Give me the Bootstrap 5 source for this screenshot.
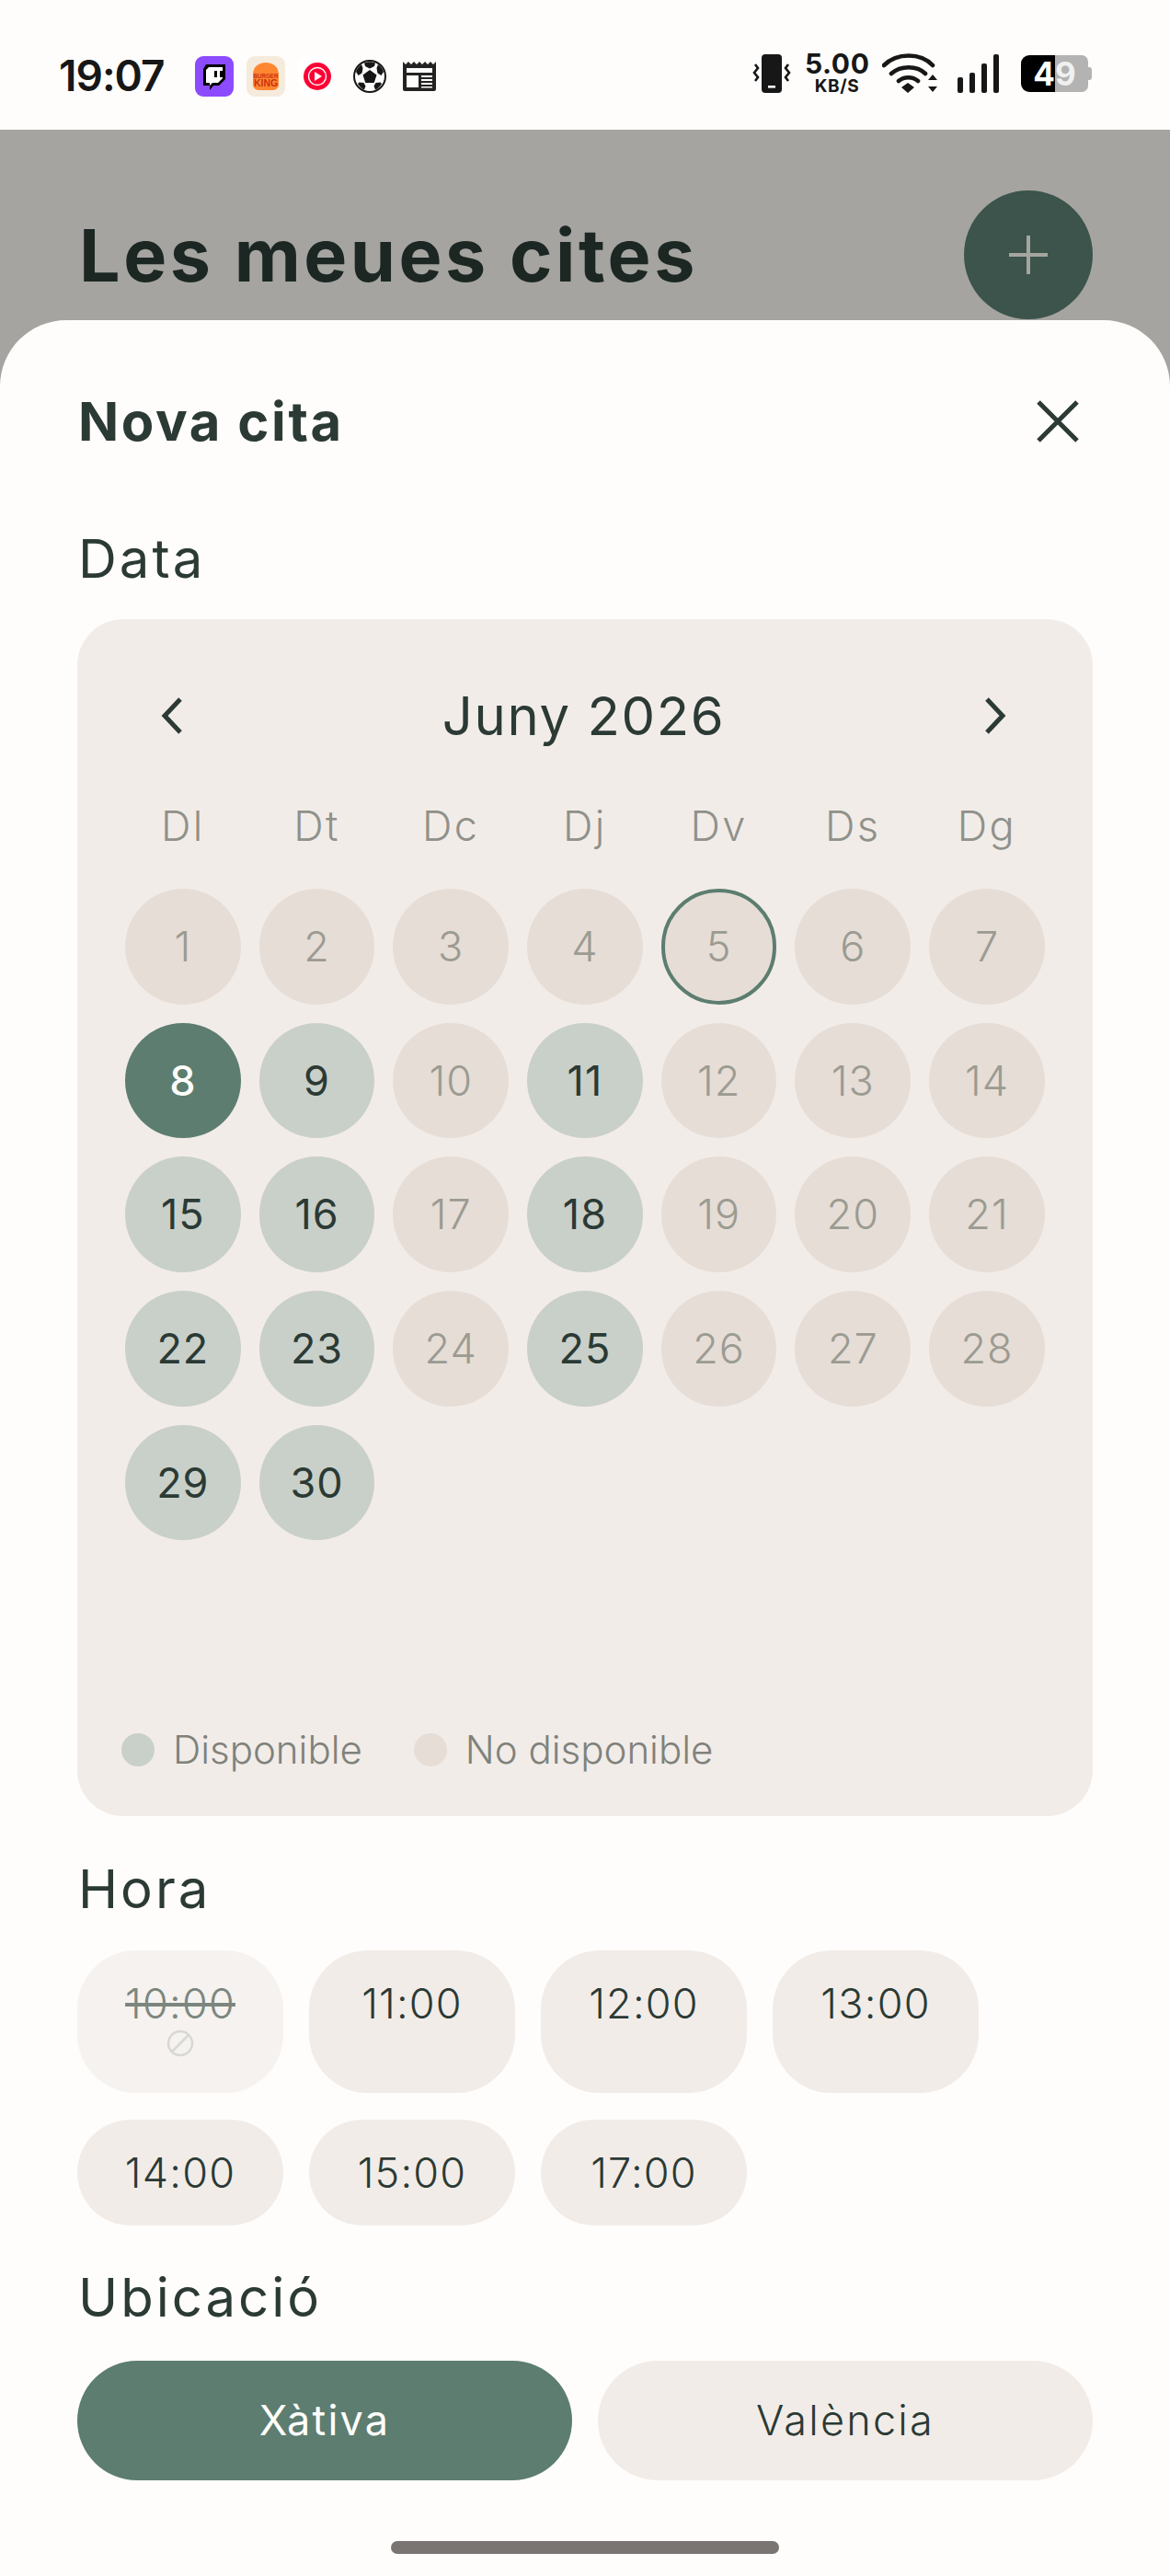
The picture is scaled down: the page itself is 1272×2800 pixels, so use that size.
<!DOCTYPE html>
<html lang="ca">
<head>
    <meta charset="UTF-8">
    <meta name="viewport" content="width=device-width, initial-scale=1.0">
    <title>Les meues cites</title>
    <link href="https://cdn.jsdelivr.net/npm/bootstrap@5.3.3/dist/css/bootstrap.min.css" rel="stylesheet">
    <style>
        html, body { margin: 0; background: #fffdfb; }
        body { width: 1272px; height: 2800px; overflow: hidden; font-family: "Inter", "Liberation Sans", sans-serif; color: #2b3a35; }
        .status-bar { height: 141px; padding: 0 84px 36px 64px; background: #fffdfb; color: #171717; }
        .clock { font-size: 46px; font-weight: 600; letter-spacing: -1px; width: 148px; line-height: 1; }
        .app-icon { display: block; width: 42px; height: 44px; }
        .speed { width: 70px; text-align: center; font-weight: 700; color: #171717; }
        .speed-num { font-size: 30px; letter-spacing: .6px; line-height: 28px; }
        .speed-unit { font-size: 19px; letter-spacing: .6px; line-height: 22px; }
        .battery { width: 78px; height: 40px; font-size: 35px; font-weight: 700; line-height: 40px; margin-left: 23px; }
        .batt-full { width: 37px; background: #000; color: #fff; border-radius: 9px 0 0 9px; text-align: right; }
        .batt-empty { width: 36px; background: #b3b3b3; color: #f0f0f0; border-radius: 0 7px 7px 0; }
        .batt-tip { width: 4px; height: 14px; background: #b3b3b3; border-radius: 0 3px 3px 0; }
        .backdrop { background: #a5a4a1; height: 2659px; }
        .page-head { height: 207px; padding: 66px 84px 1px 86px; }
        .page-title { font-size: 79px; font-weight: 700; color: #1c2723; margin: 0; line-height: 140px; letter-spacing: 3.5px; }
        .fab { width: 140px; height: 140px; border-radius: 50%; background: #3c544b; border: 0; padding: 0; }
        .sheet { background: #fffdfb; border-radius: 72px 72px 0 0; height: 2452px; padding: 74px 84px 0; }
        .sheet-title { font-size: 58px; font-weight: 700; line-height: 72px; margin: 0; padding-left: 1px; letter-spacing: 2.6px; }
        .close-x { background: none; border: 0; padding: 0; width: 50px; height: 50px; margin-right: 13px; }
        .field-label { font-size: 58px; font-weight: 400; line-height: 72px; margin: 0; padding-left: 1px; letter-spacing: 3px; }
        .cal-card { background: #f2ece8; border-radius: 50px; height: 1301px; margin-top: 30px; margin-bottom: 43px; padding: 60px 52px 50px; }
        .cal-head { height: 90px; padding: 0 32px 0 29px; }
        .cal-month { font-size: 58px; font-weight: 400; letter-spacing: 1.6px; line-height: 90px; }
        .arrow-btn { background: none; border: 0; padding: 0; width: 48px; height: 48px; }
        .week-row, .day-grid { display: grid; grid-template-columns: repeat(7, 125.7px); column-gap: 20px; }
        .week-row { margin-top: 50px; height: 50px; font-size: 45px; font-weight: 300; color: #8f918a; text-align: center; line-height: 50px; letter-spacing: 2.4px; }
        .day-grid { margin-top: 43px; row-gap: 20px; height: 854px; grid-auto-rows: 125.7px; }
        .day-cell { border-radius: 50%; font-size: 45px; display: flex; align-items: center; justify-content: center; letter-spacing: 1px; }
        .day-off { background: #e6ddd6; color: #9b9b92; font-weight: 300; }
        .day-today { background: #e6ddd6; color: #9b9b92; font-weight: 300; border: 4px solid #5c7d70; }
        .day-free { background: #c9d0c9; color: #2b3a35; font-weight: 400; }
        .day-selected { background: #5c7d70; color: #fffdfb; font-weight: 500; }
        .legend-row { margin-top: 62px; margin-left: -4px; height: 40px; font-size: 42px; font-weight: 300; color: #7f827b; line-height: 40px; }
        .legend-dot { width: 36px; height: 36px; border-radius: 50%; margin-right: 20px; }
        .dot-free { background: #c9d0c9; }
        .dot-off { background: #e6ddd6; }
        .hour-row { margin-top: 31px; gap: 28px; }
        .hour-chip { width: 224px; background: #f2ece8; font-size: 45px; font-weight: 300; color: #2b3a35; text-align: center; line-height: 54px; letter-spacing: 1.2px; }
        .hour-tall { height: 155px; border-radius: 64px; padding-top: 31px; }
        .hour-short { height: 115px; border-radius: 58px; padding-top: 31px; }
        .hour-off { background: #f5f2ef; color: #7c867f; }
        .hour-off svg { display: block; margin: 1px auto 0; }
        .place-row { margin-top: 33px; gap: 28px; }
        .place-btn { flex: 1 1 0; height: 130px; border: 0; border-radius: 65px; font-size: 45px; font-weight: 300; letter-spacing: 2.2px; background: #f2ece8; color: #2b3a35; }
        .place-active { background: #5c7d70; color: #fffdfb; font-weight: 400; }
        .home-bar { width: 422px; height: 14px; border-radius: 7px; background: #7a7572; margin: 66px auto 0; }
        .section-gap { margin-top: 42px; }
    </style>
</head>
<body>
    <div class="status-bar d-flex align-items-end">
        <div class="clock">19:07</div>
        <div class="d-flex align-items-center" style="gap:14px">
            <svg class="app-icon" viewBox="0 0 42 44"><rect width="42" height="44" rx="9" fill="#8c4bff"/><path d="M12 9h21v16l-7 7h-6l-4 5v-5h-7V14z" fill="#000"/><path d="M15 12h15v12l-5 5h-6l-3 3v-3h-4V15z" fill="#fff"/><path d="M21 16h3v7h-3zM27 16h3v7h-3z" fill="#000"/></svg>
            <svg class="app-icon" viewBox="0 0 42 44"><rect width="42" height="44" rx="9" fill="#f5ebdc"/><path d="M7 20c0-8 6-13 14-13s14 5 14 13v11c0 3-3 6-6 6H13c-3 0-6-3-6-6z" fill="#ff8732"/><text x="21" y="24" text-anchor="middle" font-size="8" font-weight="700" fill="#c9320f" font-family="Liberation Sans" textLength="27" lengthAdjust="spacingAndGlyphs">BURGER</text><text x="21" y="33" text-anchor="middle" font-size="10" font-weight="700" fill="#c9320f" font-family="Liberation Sans" textLength="26" lengthAdjust="spacingAndGlyphs">KING</text></svg>
            <svg class="app-icon" viewBox="0 0 42 44"><rect width="42" height="44" rx="9" fill="#fff"/><circle cx="21" cy="22" r="15" fill="#ff0033"/><circle cx="21" cy="22" r="9.5" fill="none" stroke="#fff" stroke-width="1.4"/><path d="M18 17l8 5-8 5z" fill="#fff"/></svg>
            <svg class="app-icon" style="width:38px;margin-left:3px" viewBox="0 0 38 44">
                <circle cx="19" cy="22" r="17" fill="#fffdfb" stroke="#171717" stroke-width="2"/>
                <path d="M19 15l7.500 5.500-2.800 8.500h-9.400l-2.800-8.500zM13 7.500c4-1.800 8-1.800 12 0l-1 3.500-5 2.500-5-2.500zM4 17c1-3 3-6 6-8l1.500 4-1 5.500-4 2.500zM34 17c-1-3-3-6-6-8l-1.500 4 1 5.500 4 2.500zM6 30c2 3 4 5.500 7 6.500l1.500-4-2-3.500-5-.5zM32 30c-2 3-4 5.500-7 6.500l-1.500-4 2-3.500 5-.5z" fill="#171717"/>
            </svg>
            <svg class="app-icon" style="width:36px;margin-left:3px" viewBox="0 0 36 44"><path d="M0 6l3 3 3-3 3 3 3-3 3 3 3-3 3 3 3-3 3 3 3-3 3 3 3-3v30a2 2 0 0 1-2 2H2a2 2 0 0 1-2-2z" fill="#232323"/><path d="M4 13h28v5H4zM4 21h13v13H4zM20 21h12v2H20zM20 25h12v2H20zM20 29h12v2H20zM20 33h12v1.500H20z" fill="#fffdfb"/></svg>
        </div>
        <div class="d-flex align-items-center ms-auto">
            <svg width="44" height="44" viewBox="0 0 44 44"><rect x="11" y="1" width="22" height="42" rx="4" fill="#171717"/><rect x="18" y="35" width="8" height="2.600" fill="#fff"/><path d="M4 12l3 4-4 5 4 5-3 4M40 12l-3 4 4 5-4 5 3 4" fill="none" stroke="#171717" stroke-width="2.600"/></svg>
            <div class="speed" style="margin-left:14px"><div class="speed-num">5.00</div><div class="speed-unit">KB/S</div></div>
            <svg width="62" height="44" viewBox="0 0 62 44" style="margin-left:14px"><path d="M2 13C16-1 42-1 55 13M10 22c10-9 28-9 37 0M18 30c6-5 15-5 21 0" fill="none" stroke="#171717" stroke-width="4.600" stroke-linecap="round"/><path d="M28 43l-7-6 7-5 7 5zM50 29l5-6 5 6zM50 36h10l-5 6z" fill="#171717"/></svg>
            <svg width="46" height="44" viewBox="0 0 46 44" style="margin-left:20px"><rect x="0" y="26" width="6" height="17" rx="2" fill="#171717"/><rect x="13" y="21" width="6" height="22" rx="2" fill="#171717"/><rect x="26" y="11" width="6" height="32" rx="2" fill="#171717"/><rect x="39" y="1" width="6" height="42" rx="2" fill="#171717"/></svg>
            <div class="battery d-flex align-items-center">
                <span class="batt-full">4</span><span class="batt-empty">9</span><span class="batt-tip"></span>
            </div>
        </div>
    </div>

    <div class="backdrop">
        <div class="page-head d-flex justify-content-between align-items-center">
            <h1 class="page-title">Les meues cites</h1>
            <button class="fab d-flex align-items-center justify-content-center" type="button" aria-label="Afegir">
                <svg width="46" height="46" viewBox="0 0 46 46"><path d="M23 2v42M2 23h42" stroke="#a5a5a0" stroke-width="4"/></svg>
            </button>
        </div>

        <div class="sheet">
            <div class="d-flex justify-content-between align-items-center">
                <h2 class="sheet-title">Nova cita</h2>
                <button class="close-x" type="button" aria-label="Tancar">
                    <svg width="50" height="50" viewBox="0 0 50 50"><path d="M4 4l42 42M46 4L4 46" stroke="#2b3a35" stroke-width="5"/></svg>
                </button>
            </div>

            <h3 class="field-label" style="margin-top:77px">Data</h3>
            <div class="cal-card">
                <div class="cal-head d-flex justify-content-between align-items-center">
                    <button class="arrow-btn" type="button" aria-label="Anterior"><svg width="48" height="48" viewBox="0 0 48 48"><path d="M31 6L14 24l17 18" fill="none" stroke="#2b3a35" stroke-width="5"/></svg></button>
                    <div class="cal-month">Juny 2026</div>
                    <button class="arrow-btn" type="button" aria-label="Següent"><svg width="48" height="48" viewBox="0 0 48 48"><path d="M17 6l17 18-17 18" fill="none" stroke="#2b3a35" stroke-width="5"/></svg></button>
                </div>
                <div class="week-row">
                    <div>Dl</div><div>Dt</div><div>Dc</div><div>Dj</div><div>Dv</div><div>Ds</div><div>Dg</div>
                </div>
                <div class="day-grid" id="day-grid"></div>
                <div class="legend-row d-flex align-items-center">
                    <span class="legend-dot dot-free"></span><span>Disponible</span>
                    <span class="legend-dot dot-off" style="margin-left:56px"></span><span>No disponible</span>
                </div>
            </div>

            <h3 class="field-label">Hora</h3>
            <div class="hour-row d-flex">
                <div class="hour-chip hour-tall hour-off">
                    <s>10:00</s>
                    <svg width="30" height="30" viewBox="0 0 30 30"><circle cx="15" cy="15" r="13" fill="none" stroke="#d8d8d3" stroke-width="2.500"/><path d="M6 24L24 6" stroke="#d8d8d3" stroke-width="2.500"/></svg>
                </div>
                <div class="hour-chip hour-tall">11:00</div>
                <div class="hour-chip hour-tall">12:00</div>
                <div class="hour-chip hour-tall">13:00</div>
            </div>
            <div class="hour-row d-flex" style="margin-top:29px">
                <div class="hour-chip hour-short">14:00</div>
                <div class="hour-chip hour-short">15:00</div>
                <div class="hour-chip hour-short">17:00</div>
            </div>

            <h3 class="field-label section-gap">Ubicació</h3>
            <div class="place-row d-flex">
                <button class="place-btn place-active" type="button">Xàtiva</button>
                <button class="place-btn" type="button">València</button>
            </div>
            <div class="home-bar"></div>
        </div>
    </div>

    <script>
        // June 2026, Monday first
        const free = [9, 11, 15, 16, 18, 22, 23, 25, 29, 30];
        const grid = document.getElementById('day-grid');
        for (let d = 1; d <= 30; d++) {
            let kind = 'day-off';
            if (d === 5) kind = 'day-today';
            if (d === 8) kind = 'day-selected';
            if (free.includes(d)) kind = 'day-free';
            grid.innerHTML += `<div class="day-cell ${kind}">${d}</div>`;
        }
    </script>
    <script src="https://cdn.jsdelivr.net/npm/bootstrap@5.3.3/dist/js/bootstrap.bundle.min.js"></script>
</body>
</html>
